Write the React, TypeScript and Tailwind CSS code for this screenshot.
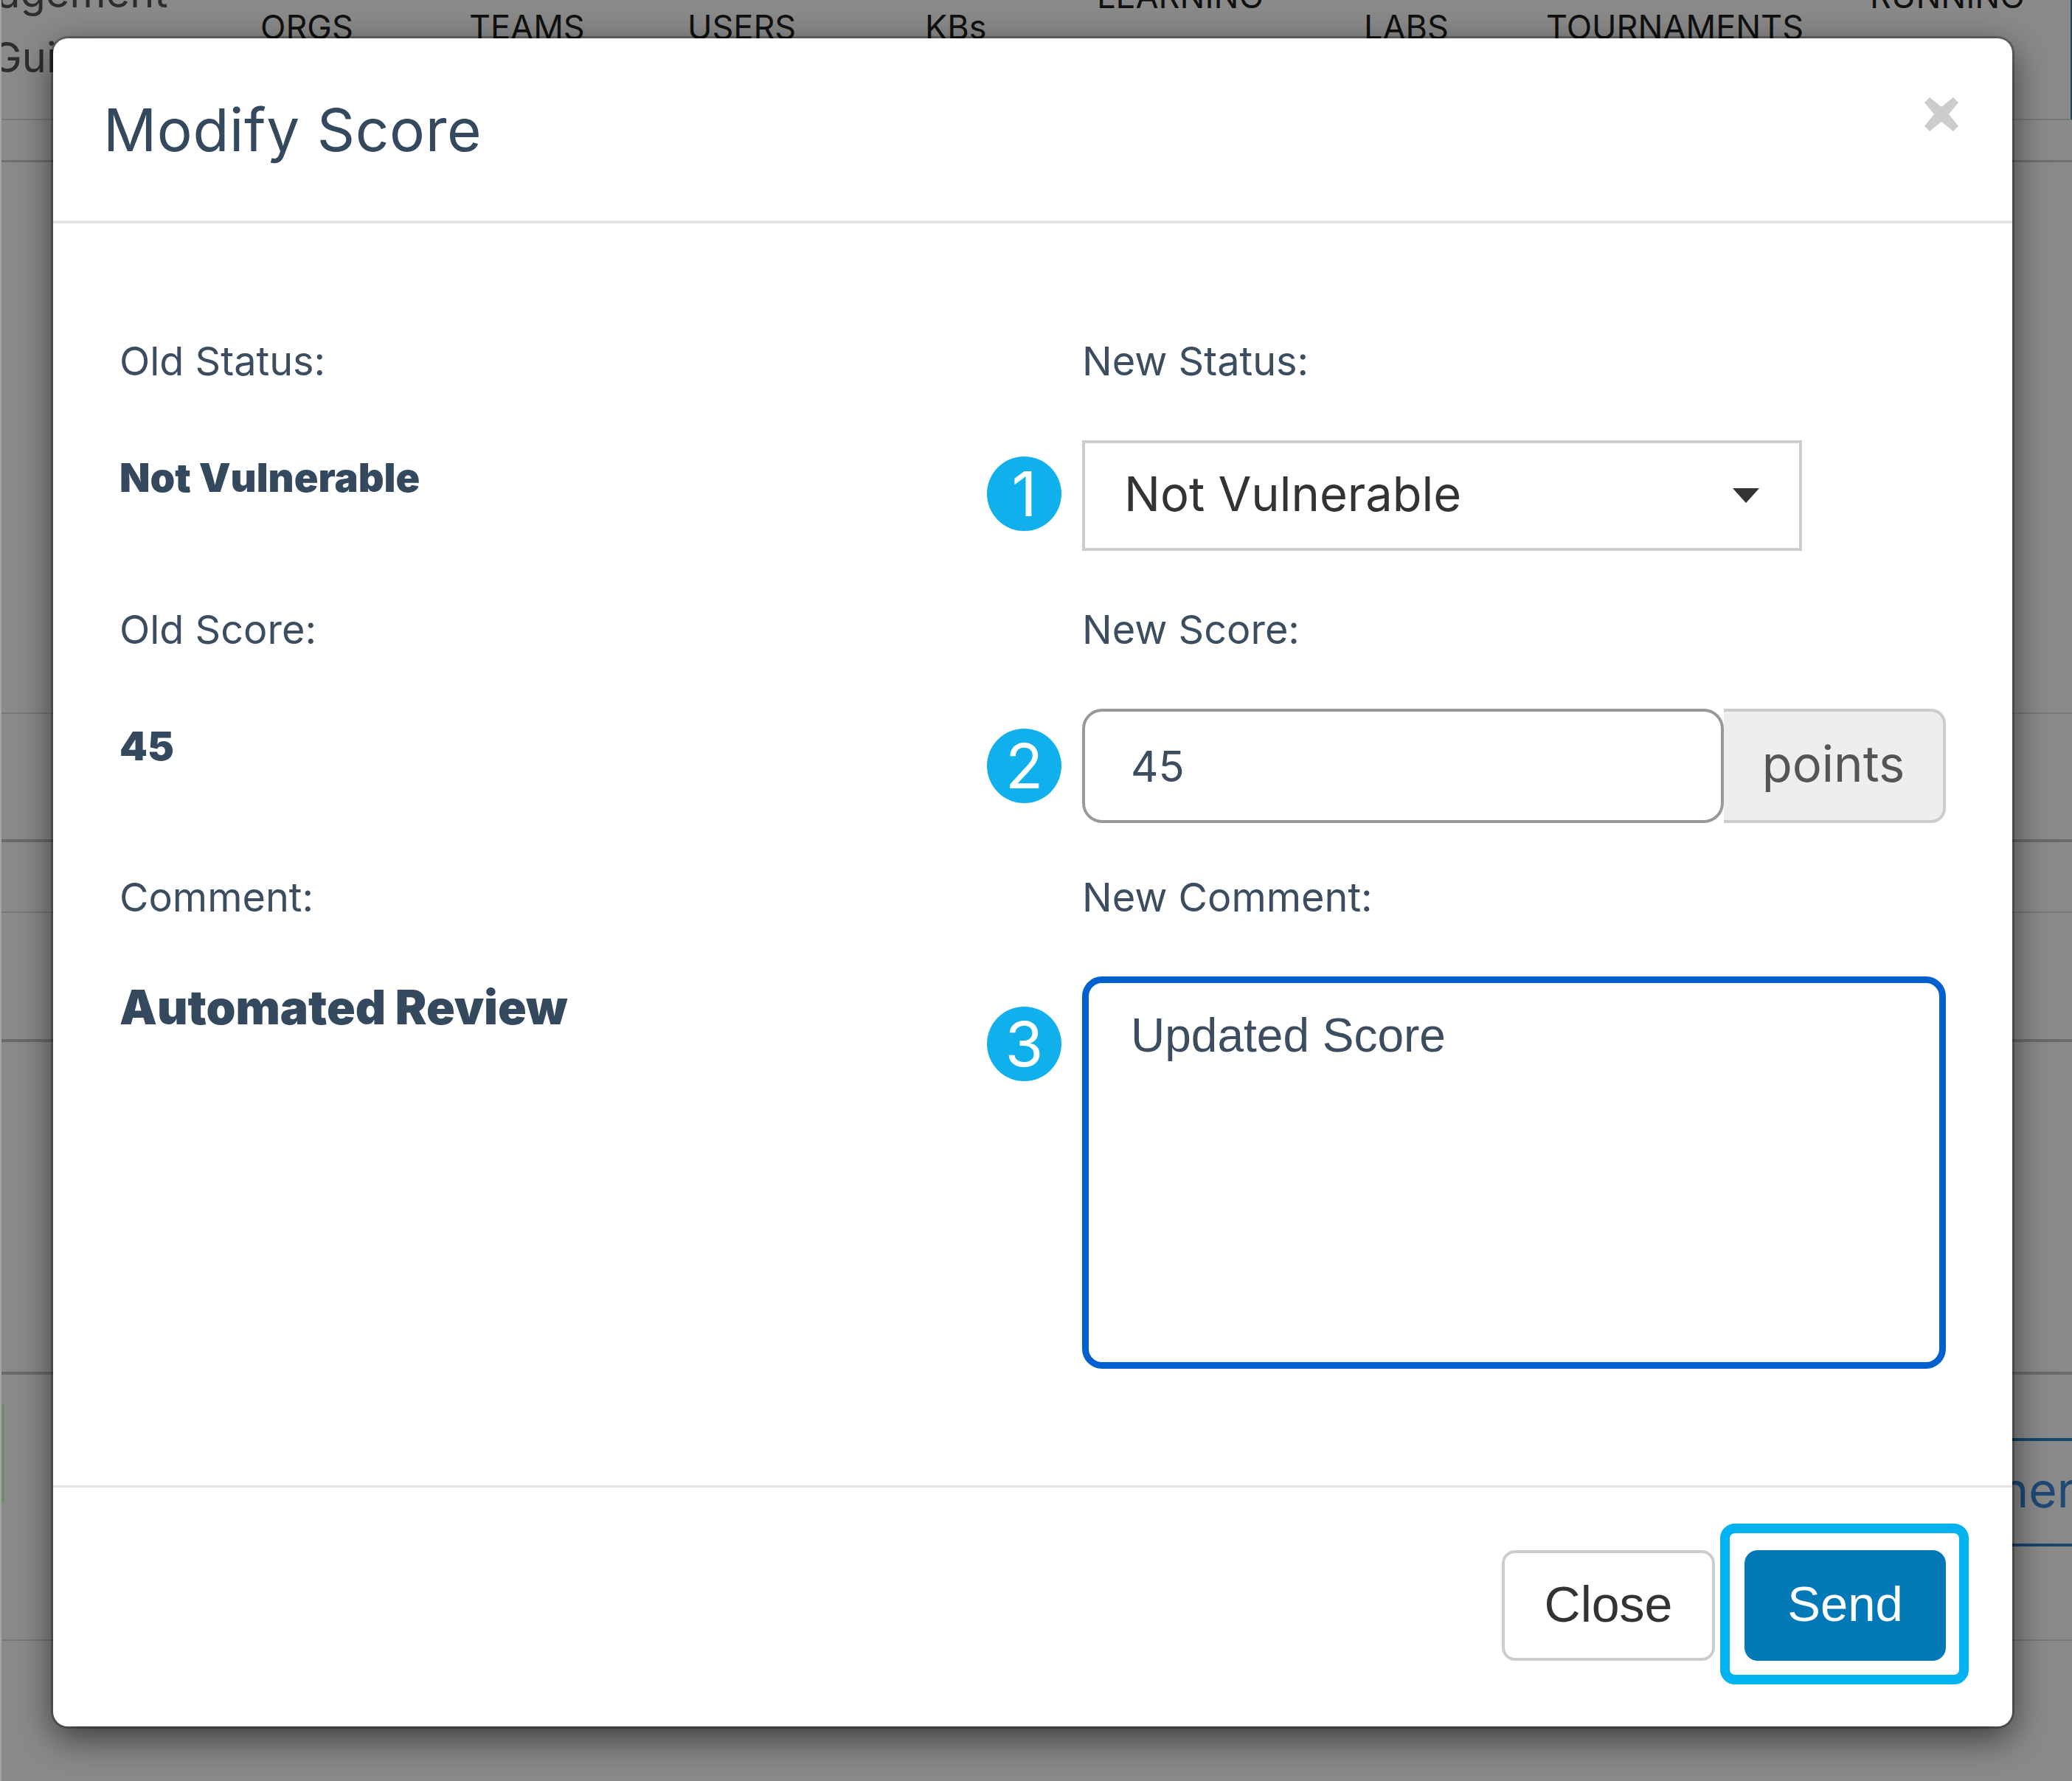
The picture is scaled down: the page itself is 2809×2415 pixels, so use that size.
const sans = "font-['Inter',sans-serif]"

function Badge({ n, className }: { n: number; className: string }) {
  return (
    <span
      className={`absolute left-[-129px] flex h-[101px] w-[101px] items-center justify-center rounded-full bg-[#0fb0ec] text-[84px] leading-none font-normal text-white ${sans} ${className}`}
    >
      {n}
    </span>
  )
}

function Label({ children }: { children: string }) {
  return <div className={`flex h-[80px] items-center text-[54px] text-[#3b4d5f] ${sans}`}>{children}</div>
}

function PageBehind() {
  return (
    <div className={`flex h-full flex-col border-l-[2px] border-[#a5a5a5] ${sans}`}>
      <div className="flex h-[163px] shrink-0 overflow-hidden border-r-[2px] border-b-2 border-r-[#1d4a55] border-b-[#777]">
        <div className="ml-[-6px] w-[357px] shrink-0 text-[56px] leading-[88px] text-[#2e2e2e]">
          <div className="mt-[-54px]">agement</div>
          <div className="ml-[-8px]">Guide</div>
        </div>
        <nav className="flex flex-1 text-[45px] leading-[42px] text-[#111]">
          <div className="mt-[16px] w-[283px]">ORGS</div>
          <div className="mt-[16px] w-[296px]">TEAMS</div>
          <div className="mt-[16px] w-[322px]">USERS</div>
          <div className="mt-[16px] w-[233px]">KBs</div>
          <div className="mt-[-26px] w-[362px]">LEARNING</div>
          <div className="mt-[16px] w-[247px]">LABS</div>
          <div className="mt-[16px] w-[439px]">TOURNAMENTS</div>
          <div className="mt-[-26px]">RUNNING</div>
        </nav>
      </div>
      <div className="h-[57px] shrink-0 border-b-[3px] border-[#6f6f6f]" />
      <div className="h-[748px] shrink-0 border-b-2 border-[#777]" />
      <div className="h-[174px] shrink-0 border-b-[4px] border-[#6b6b6b]" />
      <div className="h-[96px] shrink-0 border-b-2 border-[#777]" />
      <div className="h-[175px] shrink-0 border-b-[4px] border-[#6b6b6b]" />
      <div className="h-[451px] shrink-0 border-b-[4px] border-[#6b6b6b]" />
      <div className="flex h-[361px] shrink-0 items-start justify-between border-b-2 border-[#777]">
        <div className="mt-[40px] h-[133px] w-[4px] bg-[#6d8a6d]" />
        <div className="mt-[86px] flex h-[147px] w-[420px] translate-x-[100px] items-center justify-center border-y-[4px] border-[#17466f] pb-[6px] text-[66px] text-[#1d4a75]">
          Partner
        </div>
      </div>
    </div>
  )
}

export default function App() {
  return (
    <div className="relative h-[2415px] w-[2809px] overflow-hidden bg-[#8a8a8a]">
      <PageBehind />

      <div className="absolute top-[52px] left-[72px] flex h-[2289px] w-[2656px] flex-col rounded-[20px] bg-white shadow-[0_0_0_3px_rgba(0,0,0,0.25),0_15px_50px_rgba(0,0,0,0.6)]">
        <div className="flex h-[251px] shrink-0 justify-between border-b-[4px] border-[#e5e5e5] pr-[72px] pl-[68px]">
          <h2 className={`mt-[84px] text-[80px] leading-[80px] tracking-[0.6px] text-[#34495e] ${sans}`}>Modify Score</h2>
          <svg viewBox="0 0 48 48" className="mt-[79px] h-[48px] w-[48px] fill-[#cccccc]">
            <path d="M8 1 L24 14 L40 1 L47 8 L34 24 L47 40 L40 47 L24 34 L8 47 L1 40 L14 24 L1 8 Z" />
          </svg>
        </div>

        <div className="grid flex-1 grid-cols-[1305px_1fr] content-start pt-[146px] pr-[90px] pl-[90px]">
          <Label>Old Status:</Label>
          <Label>New Status:</Label>

          <div className={`mt-[68px] text-[54px] leading-[102px] font-black text-[#34495e] ${sans}`}>Not Vulnerable</div>
          <div className="relative mt-[68px]">
            <Badge n={1} className="top-[22px]" />
            <div className={`flex h-[150px] w-[976px] items-center justify-between border-[4px] border-[#cccccc] pr-[54px] pb-[5px] pl-[53px] text-[65px] text-[#333] ${sans}`}>
              Not Vulnerable
              <svg viewBox="0 0 36 20" className="mt-[5px] h-[20px] w-[36px] fill-[#333]">
                <path d="M0 0 H36 L18 20 Z" />
              </svg>
            </div>
          </div>

          <div className="mt-[66px]"><Label>Old Score:</Label></div>
          <div className="mt-[66px]"><Label>New Score:</Label></div>

          <div className={`mt-[69px] text-[54px] leading-[100px] font-black text-[#34495e] ${sans}`}>45</div>
          <div className="relative mt-[68px]">
            <Badge n={2} className="top-[27px]" />
            <div className="flex h-[155px]">
              <input
                readOnly
                defaultValue="45"
                className={`h-full w-[870px] rounded-[27px] border-[4px] border-[#999] bg-white pl-[62px] text-[58px] text-[#3b4d5f] outline-none ${sans}`}
              />
              <div className={`flex flex-1 items-center justify-center rounded-r-[20px] border-y-[4px] border-r-[4px] border-[#cccccc] bg-[#eeeeee] pb-[4px] text-[67px] text-[#555] ${sans}`}>
                points
              </div>
            </div>
          </div>

          <div className="mt-[60px]"><Label>Comment:</Label></div>
          <div className="mt-[60px]"><Label>New Comment:</Label></div>

          <div className={`mt-[68px] text-[64px] leading-[84px] font-black text-[#34495e] ${sans}`}>Automated Review</div>
          <div className="relative mt-[68px]">
            <Badge n={3} className="top-[41px]" />
            <textarea
              readOnly
              defaultValue="Updated Score"
              className="block h-[532px] w-full resize-none rounded-[27px] border-[9px] border-[#0060cf] bg-white pt-[32px] pl-[57px] font-['Liberation_Sans',sans-serif] text-[64px] leading-[78px] text-[#3b4d5f] outline-none"
            />
          </div>
        </div>

        <div className="flex h-[327px] shrink-0 items-start justify-end gap-[40px] border-t-[3px] border-[#e5e5e5] pt-[85px] pr-[90px]">
          <button className="h-[150px] w-[289px] rounded-[18px] border-[4px] border-[#cccccc] bg-white pb-[5px] font-['Liberation_Sans',sans-serif] text-[68px] text-[#333]">
            Close
          </button>
          <div className="relative">
            <button className="h-[150px] w-[273px] rounded-[18px] bg-[#0479b7] pb-[3px] font-['Liberation_Sans',sans-serif] text-[67px] text-white">
              Send
            </button>
            <div className="absolute top-[-36px] left-[-33px] h-[218px] w-[337px] rounded-[20px] border-[13px] border-[#00b2f0]" />
          </div>
        </div>
      </div>
    </div>
  )
}
